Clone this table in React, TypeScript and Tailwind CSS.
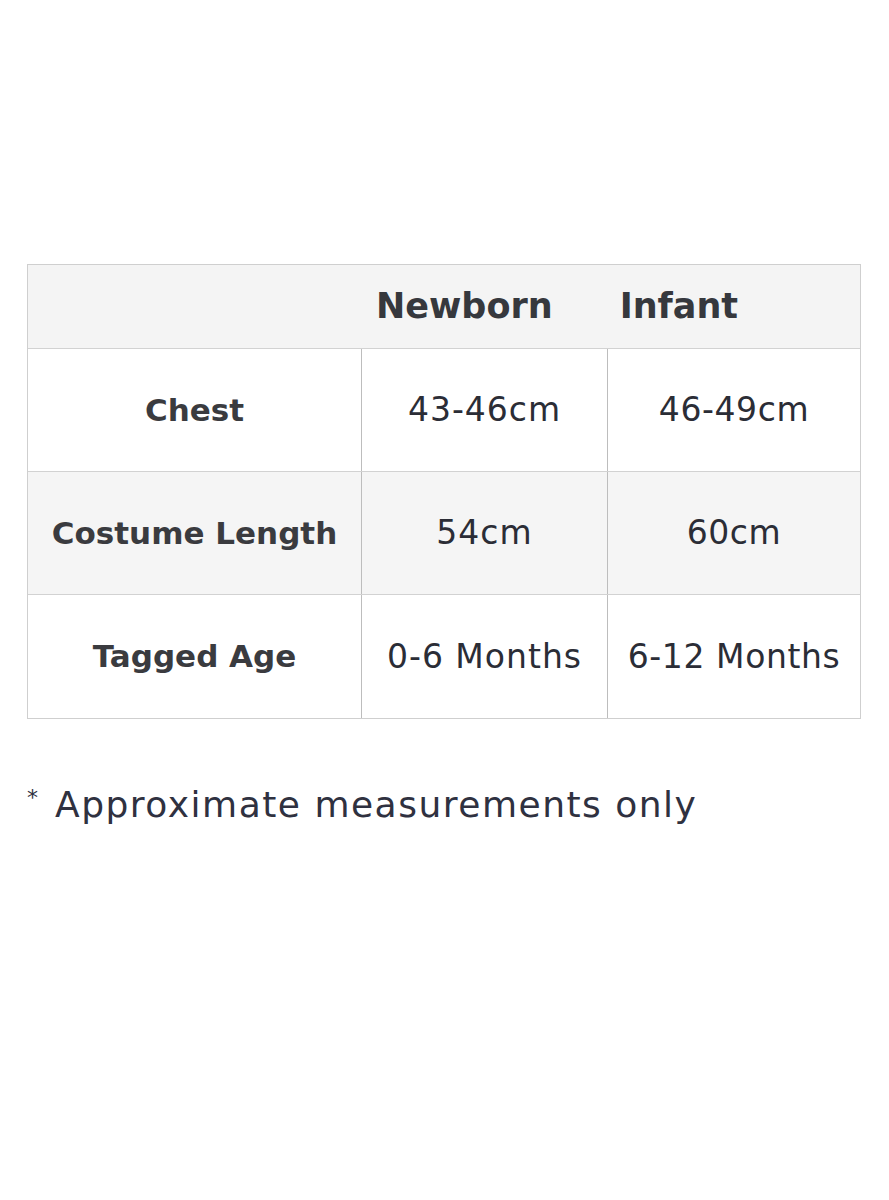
export default function App() {
  const rows = [
    { label: "Chest", a: "43-46cm", b: "46-49cm", shade: false },
    { label: "Costume Length", a: "54cm", b: "60cm", shade: true },
    { label: "Tagged Age", a: "0-6 Months", b: "6-12 Months", shade: false },
  ];

  return (
    <div className="min-h-[1200px] w-[889px] bg-white pt-[264px] px-[27px] font-['DejaVu_Sans',sans-serif]">
      <div className="w-[834px] border border-[#cfcfcf]">
        <div className="flex h-[84px] items-center bg-[#f4f4f4] border-b border-[#d2d2d2]">
          <div className="w-[348px]" />
          <div className="text-[35px] font-bold text-[#36383d]">Newborn</div>
          <div className="ml-[67px] text-[35px] font-bold text-[#36383d]">Infant</div>
        </div>
        {rows.map((r, i) => (
          <div
            key={r.label}
            className={`flex h-[123px] ${r.shade ? "bg-[#f5f5f5]" : "bg-white"} ${i < rows.length - 1 ? "border-b border-[#d2d2d2]" : ""}`}
          >
            <div className="w-[334px] flex items-center justify-center border-r border-[#bdbdbd] text-[31px] font-bold text-[#3a3b3f]">
              {r.label}
            </div>
            <div className="w-[246px] flex items-center justify-center border-r border-[#bdbdbd] text-[33px] tracking-[1px] text-[#2b2d36]">
              {r.a}
            </div>
            <div className="flex-1 flex items-center justify-center text-[33px] tracking-[0.6px] text-[#2b2d36]">
              {r.b}
            </div>
          </div>
        ))}
      </div>
      <div className="mt-[62px] flex items-start text-[#2f3140]">
        <span className="mt-[6px] w-[28px] text-[22px] leading-none">*</span>
        <span className="text-[36px] tracking-[1.5px] leading-[48px]">Approximate measurements only</span>
      </div>
    </div>
  );
}
